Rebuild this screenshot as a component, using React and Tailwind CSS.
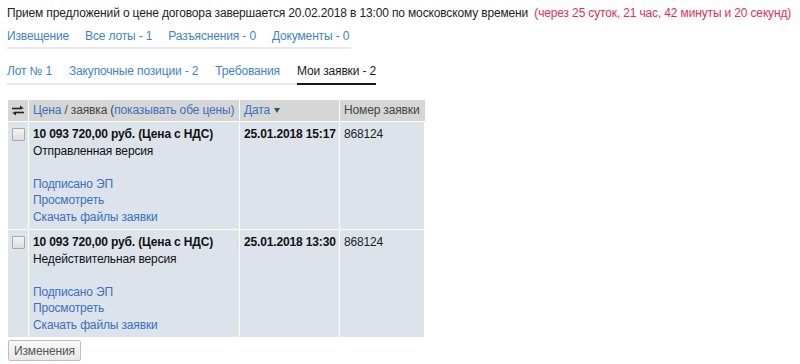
import React from "react";

const link = "text-[#3a6fc4]";

function Row({ status, date }) {
  return (
    <tr className="bg-[#dde3eb] align-top">
      <td className="border border-white pt-[6px] pl-[4px]">
        <div className="w-[13px] h-[13px] border border-[#a7a7a7] bg-gradient-to-b from-[#f4f4f4] to-[#dcdcdc] rounded-[1px]" />
      </td>
      <td className="border border-white px-[4px] py-[4px] whitespace-nowrap">
        <div className="font-bold text-[#111]">10 093 720,00 руб. (Цена с НДС)</div>
        <div className="text-[#111]">{status}</div>
        <div>&nbsp;</div>
        <div className={link}>Подписано ЭП</div>
        <div className={link}>Просмотреть</div>
        <div className={link}>Скачать файлы заявки</div>
      </td>
      <td className="border border-white px-[4px] py-[4px] font-bold text-[#111] whitespace-nowrap">{date}</td>
      <td className="border border-white px-[4px] py-[4px] text-[#222]">868124</td>
    </tr>
  );
}

export default function App() {
  return (
    <div className="bg-white w-[800px] h-[364px] overflow-hidden pl-[7px] pt-[5px] text-[12px] tracking-[-0.15px] leading-[16.5px] text-[#222]" style={{ fontFamily: '"Liberation Sans", Arial, sans-serif' }}>
      <div className="whitespace-nowrap">
        Прием предложений о цене договора завершается 20.02.2018 в 13:00 по московскому времени{" "}
        <span className="ml-[3px] text-[#e52d52]">(через 25 суток, 21 час, 42 минуты и 20 секунд)</span>
      </div>

      <div className="mt-[6px] flex w-[344px] border-b-2 border-[#e8e8e8] pb-[3px] gap-[16px] text-[#3d84c6] whitespace-nowrap">
        <span className="shrink-0">Извещение</span>
        <span className="shrink-0">Все лоты - 1</span>
        <span className="shrink-0">Разъяснения - 0</span>
        <span className="shrink-0">Документы - 0</span>
      </div>

      <div className="mt-[14px] flex w-[368px] border-b-2 border-[#e8e8e8] gap-[17px] text-[#3d84c6] whitespace-nowrap">
        <span className="shrink-0 pb-[3px]">Лот № 1</span>
        <span className="shrink-0 pb-[3px]">Закупочные позиции - 2</span>
        <span className="shrink-0 pb-[3px]">Требования</span>
        <span className="shrink-0 pb-[3px] -mb-[2px] border-b-2 border-[#1a1a1a] text-[#1a1a1a]">Мои заявки - 2</span>
      </div>

      <table className="mt-[15px] border-collapse table-fixed w-[417px]">
        <colgroup>
          <col className="w-[21px]" />
          <col className="w-[211px]" />
          <col className="w-[100px]" />
          <col className="w-[85px]" />
        </colgroup>
        <thead>
          <tr className="bg-[#d6d6d6] h-[22px]">
            <th className="border border-white border-t-0 border-l-0 font-normal p-0">
              <svg width="14" height="11" viewBox="0 0 14 11" className="mx-auto block">
                <path d="M1 3.5 H11" stroke="#222" strokeWidth="1.6" />
                <path d="M9 0.5 L13 3.5 L9 3.5 Z" fill="#222" />
                <path d="M3 7.5 H13" stroke="#222" strokeWidth="1.6" />
                <path d="M5 10.5 L1 7.5 L5 7.5 Z" fill="#222" />
              </svg>
            </th>
            <th className="border border-white border-t-0 font-normal text-left px-[4px] whitespace-nowrap text-[#444]">
              <span className={link}>Цена</span> / заявка (<span className={link}>показывать обе цены)</span>
            </th>
            <th className="border border-white border-t-0 font-normal text-left px-[4px] whitespace-nowrap">
              <span className={link}>Дата</span>
              <span className="ml-[4px] inline-block align-middle w-0 h-0 border-l-[3.5px] border-r-[3.5px] border-t-[5px] border-l-transparent border-r-transparent border-t-[#2c5866]" />
            </th>
            <th className="border border-white border-t-0 border-r-0 font-normal text-left px-[4px] text-[#444] whitespace-nowrap">Номер заявки</th>
          </tr>
        </thead>
        <tbody>
          <Row status="Отправленная версия" date="25.01.2018 15:17" />
          <Row status="Недействительная версия" date="25.01.2018 13:30" />
        </tbody>
      </table>

      <button className="mt-[2px] ml-[1px] h-[21px] px-[5px] border border-[#bdbdbd] rounded-[2px] bg-gradient-to-b from-[#fafafa] to-[#e9e9e9] text-[#555] text-[12px] leading-[18px]" style={{ fontFamily: '"Liberation Sans", Arial, sans-serif' }}>
        Изменения
      </button>
    </div>
  );
}
